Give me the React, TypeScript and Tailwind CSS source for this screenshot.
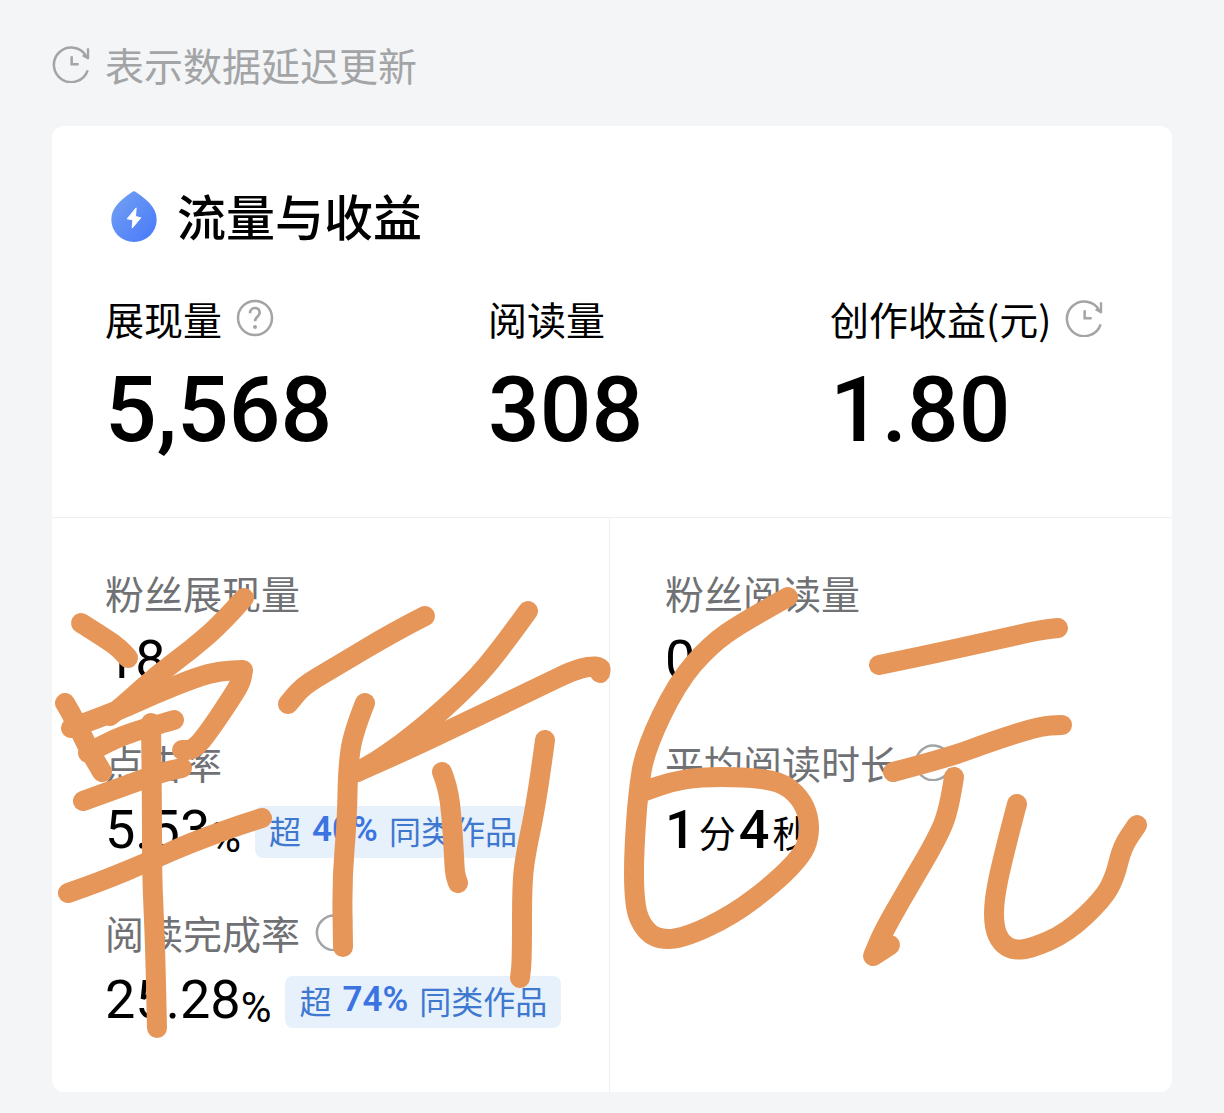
import React from 'react';

type Point = [number, number];

// Freehand marker strokes, each one a list of pen positions
const strokes: Point[][] = [
  // first character
  [[81, 623], [108, 640], [120, 649], [128, 658]],
  [[244, 598], [223, 622], [192, 649], [157, 675], [125, 704], [110, 716]],
  [[71, 728], [110, 714], [155, 694], [197, 677], [220, 671], [243, 670], [243, 670], [241, 682], [232, 697], [210, 730], [194, 750], [182, 750]],
  [[65, 703], [75, 720], [88, 748], [102, 772]],
  [[88, 753], [110, 741], [133, 732], [160, 724], [174, 720]],
  [[83, 801], [133, 783], [163, 772], [182, 768]],
  [[151, 723], [152, 800], [152, 877], [155, 940], [157, 1028]],
  [[68, 893], [100, 882], [150, 861], [190, 843], [237, 826], [262, 818]],
  // second character
  [[425, 616], [397, 630], [330, 670], [303, 686], [288, 704]],
  [[528, 611], [500, 650], [470, 685], [420, 730], [380, 759], [357, 772]],
  [[357, 772], [403, 752], [470, 720], [543, 685], [572, 671], [590, 666], [601, 667], [600, 673]],
  [[365, 703], [353, 733], [348, 767], [347, 820], [342, 880], [343, 947]],
  [[442, 772], [448, 787], [452, 820], [454, 857], [455, 874], [458, 883]],
  [[545, 740], [537, 800], [525, 857], [522, 887], [522, 960], [520, 978]],
  // digit
  [[788, 597], [743, 622], [710, 645], [677, 683], [645, 750], [638, 793], [634, 853], [634, 893], [638, 920], [654, 939], [682, 939], [733, 915], [777, 881], [802, 855], [809, 838], [809, 817], [800, 797], [780, 781], [743, 777], [700, 777], [670, 782], [645, 791]],
  // last character
  [[879, 665], [923, 656], [1000, 639], [1040, 630], [1058, 628]],
  [[893, 772], [950, 757], [990, 742], [1040, 726], [1062, 725]],
  [[954, 777], [949, 810], [937, 839], [907, 890], [883, 932], [873, 956], [873, 956], [890, 945]],
  [[1017, 804], [1003, 857], [994, 900], [994, 927], [1001, 943], [1013, 950], [1030, 949], [1067, 933], [1103, 899], [1115, 877], [1122, 847], [1137, 825]],
];

// Runs a quadratic curve through the midpoints of the pen positions
function toPath(points: Point[]) {
  let d = `M${points[0][0]} ${points[0][1]}`;
  for (let i = 1; i < points.length - 1; i++) {
    const [x, y] = points[i];
    const [nx, ny] = points[i + 1];
    d += ` Q${x} ${y} ${(x + nx) / 2} ${(y + ny) / 2}`;
  }
  const last = points[points.length - 1];
  return `${d} L${last[0]} ${last[1]}`;
}

function DelayIcon() {
  return (
    <svg viewBox="0 0 114 114" className="size-[38px] shrink-0" fill="none" stroke="#a3a4a6" strokeWidth="7.5" aria-hidden="true">
      <path d="M107 76A52 52 0 1 1 103 34" />
      <path d="M108 10V40L92 31" strokeWidth="7" strokeLinejoin="round" />
      <path d="M59 34V58H80" />
    </svg>
  );
}

function HelpButton({ label }: { label: string }) {
  return (
    <button type="button" aria-label={label} className="size-[38px] shrink-0">
      <svg viewBox="0 0 114 114" className="size-full" fill="none" stroke="#a3a4a6" strokeWidth="7.5" aria-hidden="true">
        <circle cx="57" cy="57" r="51" />
        <path d="M42 43C42 22 71 22 71 41C71 53 57 54 57 67" strokeWidth="8" />
        <circle cx="57" cy="84" r="6" fill="#a3a4a6" stroke="none" />
      </svg>
    </button>
  );
}

function TrafficIcon() {
  return (
    <svg viewBox="0 0 137 154" className="h-[51px] w-[46px] shrink-0" aria-hidden="true">
      <defs>
        <linearGradient id="drop" x1="0" y1="0" x2="1" y2="1">
          <stop offset="0" stopColor="#74a2f2" />
          <stop offset="1" stopColor="#4778fa" />
        </linearGradient>
      </defs>
      <path d="M62 4Q68 -2 75 4C108 27 137 50 137 87A68.5 67 0 0 1 0 87C0 50 29 27 62 4Z" fill="url(#drop)" />
      <path d="M75 51L48 84L65 87L63 112L89 81L73 77Z" fill="#fff" stroke="#fff" strokeWidth="3" strokeLinejoin="round" />
    </svg>
  );
}

function Metric({ label, value, icon }: { label: string; value: string; icon?: React.ReactNode }) {
  return (
    <div>
      <dt className="flex h-12 items-center gap-[14px] text-[39px] leading-[48px] whitespace-nowrap">
        {label}
        {icon}
      </dt>
      <dd className="mt-5 font-['Roboto'] text-[91px] leading-24 font-medium">{value}</dd>
    </div>
  );
}

function Stat({ label, delayed, children }: { label: string; delayed?: boolean; children: React.ReactNode }) {
  return (
    <div>
      <dt className="flex h-12 items-center gap-[15px] text-[39px] leading-[48px] whitespace-nowrap text-[#707174]">
        {label}
        {delayed && <DelayIcon />}
      </dt>
      <dd className="mt-2 flex h-16 items-end whitespace-nowrap">{children}</dd>
    </div>
  );
}

function Num({ strong, children }: { strong?: boolean; children: React.ReactNode }) {
  return (
    <span className={`font-['Roboto'] text-[54px] leading-14 ${strong ? 'font-medium' : 'font-normal'}`}>
      {children}
    </span>
  );
}

function Unit({ children }: { children: React.ReactNode }) {
  return <span className="mx-[3px] text-[37px] leading-[52px]">{children}</span>;
}

function Percent() {
  return <span className="font-['Roboto'] text-[42px] leading-10 font-normal">%</span>;
}

function Badge({ value }: { value: string }) {
  return (
    <span className="ml-[14px] flex h-[52px] items-center gap-[11px] rounded-lg bg-[#e7f1fc] px-[14px] pb-1 text-[32px] leading-12 text-[#3f78cf]">
      <span>超</span>
      <strong className="font-['Roboto'] text-[35px] font-semibold text-[#3b74e0]">{value}</strong>
      <span>同类作品</span>
    </span>
  );
}

export default function App() {
  return (
    <main className="min-h-screen bg-[#f3f5f7] px-[52px] pt-10 pb-5 font-['Noto_Sans_CJK_SC',sans-serif] text-black">
      <p className="flex h-12 items-center gap-[15px] text-[39px] leading-[48px] text-[#a3a4a6]">
        <DelayIcon />
        表示数据延迟更新
      </p>

      <section className="mt-[38px] rounded-xl bg-white">
        <div className="border-b border-[#eff0f2] px-[53px] pt-[54px] pb-[59px]">
          <h2 className="flex h-[72px] items-center gap-5 pl-[6px] text-[49px] leading-[72px] font-medium">
            <TrafficIcon />
            <span className="pb-0.5">流量与收益</span>
          </h2>
          <dl className="mt-[42px] grid grid-cols-[383fr_342fr_289fr]">
            <Metric label="展现量" value="5,568" icon={<HelpButton label="展现量" />} />
            <Metric label="阅读量" value="308" />
            <Metric label="创作收益(元)" value="1.80" icon={<DelayIcon />} />
          </dl>
        </div>

        <div className="relative grid grid-cols-[558fr_562fr]">
          <dl className="flex flex-col gap-[50px] border-r border-[#eff0f2] pt-[50px] pb-16 pl-[53px]">
            <Stat label="粉丝展现量">
              <Num>18</Num>
            </Stat>
            <Stat label="点击率">
              <Num>5.53</Num>
              <Percent />
              <Badge value="40%" />
            </Stat>
            <Stat label="阅读完成率" delayed>
              <Num>25.28</Num>
              <Percent />
              <Badge value="74%" />
            </Stat>
          </dl>
          <dl className="flex flex-col gap-[50px] pt-[50px] pb-16 pl-[55px]">
            <Stat label="粉丝阅读量">
              <Num>0</Num>
            </Stat>
            <Stat label="平均阅读时长" delayed>
              <Num strong>1</Num>
              <Unit>分</Unit>
              <Num strong>4</Num>
              <Unit>秒</Unit>
            </Stat>
          </dl>

          {/* Marker drawing over the stats */}
          <svg
            viewBox="52 518 1120 574"
            className="pointer-events-none absolute inset-0 size-full"
            fill="none"
            stroke="#e69658"
            strokeWidth="20"
            strokeLinecap="round"
            strokeLinejoin="round"
            aria-hidden="true"
          >
            {strokes.map((points, i) => (
              <path key={i} d={toPath(points)} />
            ))}
          </svg>
        </div>
      </section>
    </main>
  );
}
